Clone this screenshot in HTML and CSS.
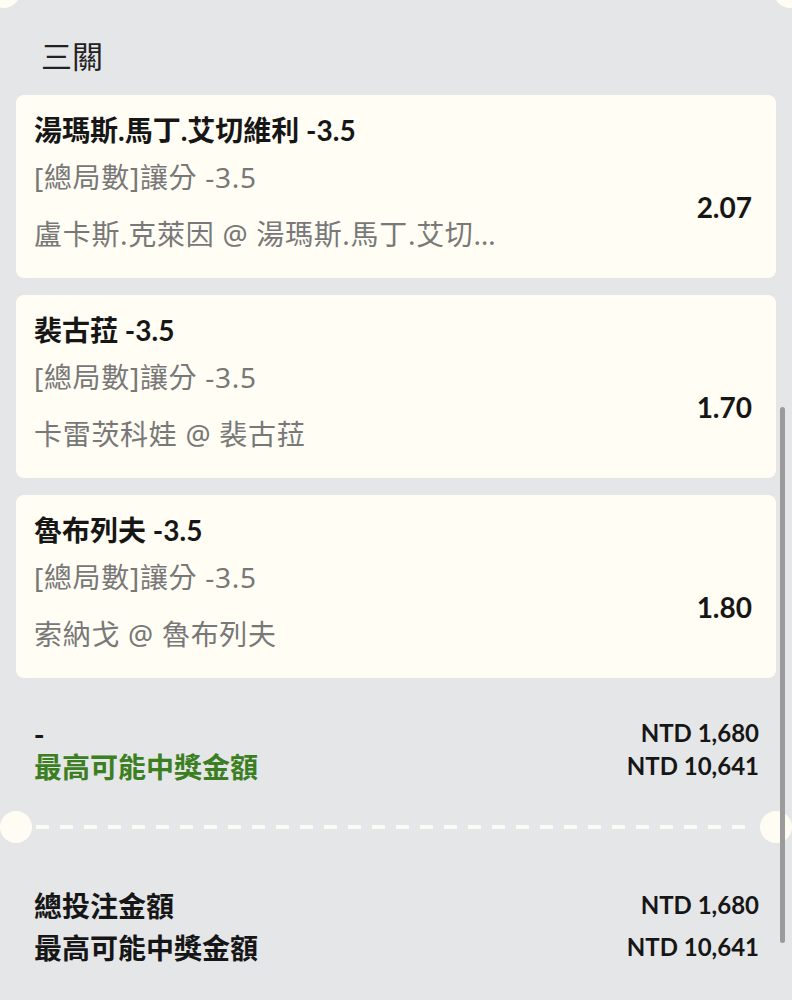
FILE: index.html
```html
<!DOCTYPE html>
<html lang="zh-Hant">
<head>
<meta charset="utf-8">
<title>三關</title>
<link rel="stylesheet" href="styles.css">
</head>
<body>
<div class="sheet">
  <span class="notch notch-tl"></span>
  <span class="notch notch-tr"></span>

  <h2 class="section-title">三關</h2>

  <div class="legs">
    <div class="leg">
      <div class="leg-name">湯瑪斯.馬丁.艾切維利 -3.5</div>
      <div class="leg-market">[總局數]讓分 -3.5</div>
      <div class="leg-event">盧卡斯.克萊因 @ 湯瑪斯.馬丁.艾切維利</div>
      <div class="leg-odds">2.07</div>
    </div>
    <div class="leg">
      <div class="leg-name">裴古菈 -3.5</div>
      <div class="leg-market">[總局數]讓分 -3.5</div>
      <div class="leg-event">卡雷茨科娃 @ 裴古菈</div>
      <div class="leg-odds">1.70</div>
    </div>
    <div class="leg">
      <div class="leg-name">魯布列夫 -3.5</div>
      <div class="leg-market">[總局數]讓分 -3.5</div>
      <div class="leg-event">索納戈 @ 魯布列夫</div>
      <div class="leg-odds">1.80</div>
    </div>
  </div>

  <div class="summary">
    <div class="row">
      <span class="label">-</span>
      <span class="amount">NTD 1,680</span>
    </div>
    <div class="row">
      <span class="label label-win">最高可能中獎金額</span>
      <span class="amount">NTD 10,641</span>
    </div>
  </div>

  <div class="divider">
    <span class="hole"></span>
    <span class="dashes"></span>
    <span class="hole"></span>
  </div>

  <div class="totals">
    <div class="row">
      <span class="label">總投注金額</span>
      <span class="amount">NTD 1,680</span>
    </div>
    <div class="row">
      <span class="label">最高可能中獎金額</span>
      <span class="amount">NTD 10,641</span>
    </div>
  </div>

  <span class="scrollbar"></span>
</div>
</body>
</html>
```

FILE: styles.css
```css
* { box-sizing: border-box; }

html, body {
  margin: 0;
  padding: 0;
}

body {
  background: #e5e6e8;
  font-family: Lato, "Noto Sans CJK TC", sans-serif;
  color: #1b1b1b;
  overflow: hidden;
}

.sheet {
  position: relative;
  height: 1000px;
  overflow: hidden;
}

.notch {
  position: absolute;
  width: 32px;
  height: 32px;
  border-radius: 50%;
  background: #fffdf3;
}
.notch-tl { left: -12px; top: -24px; }
.notch-tr { left: 774px; top: -24px; }

.section-title {
  margin: 0;
  padding: 35px 0 0 41px;
  height: 95px;
  font-family: "Noto Sans CJK TC", sans-serif;
  font-weight: 400;
  font-size: 31px;
  line-height: 40px;
  color: #222;
}

.legs {
  display: flex;
  flex-direction: column;
  gap: 17px;
  padding: 0 16px;
}

.leg {
  background: #fffdf4;
  border-radius: 8px;
  height: 183px;
  padding: 17px 24px 24px 18px;
  display: grid;
  grid-template-columns: 470px 1fr;
  grid-template-rows: auto auto auto;
  align-content: start;
}

.leg-name {
  grid-column: 1;
  grid-row: 1;
  font-size: 28px;
  font-weight: 700;
  line-height: 36px;
  color: #161616;
  white-space: nowrap;
}

.leg-market,
.leg-event {
  grid-column: 1;
  font-family: "Noto Sans", "Noto Sans CJK TC", sans-serif;
  font-size: 28px;
  line-height: 36px;
  letter-spacing: 0.7px;
  color: #787878;
  white-space: nowrap;
}

.leg-market {
  grid-row: 2;
  margin-top: 11px;
}

.leg-event {
  grid-row: 3;
  margin-top: 21px;
  overflow: hidden;
  text-overflow: ellipsis;
}

.leg-odds {
  grid-column: 2;
  grid-row: 1 / span 3;
  align-self: start;
  justify-self: end;
  margin-top: 77px;
  font-size: 28px;
  line-height: 36px;
  font-weight: 700;
  color: #161616;
}

.summary {
  padding: 38px 33px 0 34px;
}

.row {
  display: flex;
  justify-content: space-between;
  align-items: center;
  font-weight: 700;
}

.summary .row { height: 33px; }
.totals .row { height: 42px; }

.label {
  font-family: "Noto Sans CJK TC", sans-serif;
  font-size: 28px;
  line-height: 30px;
  font-weight: 700;
  color: #161616;
}

.label-win { color: #3c7e22; }

.amount {
  font-family: Lato, sans-serif;
  font-size: 24px;
  line-height: 30px;
  font-weight: 700;
  color: #161616;
}

.divider {
  display: flex;
  align-items: center;
  margin-top: 29px;
  height: 32px;
}

.hole {
  flex: 0 0 32px;
  height: 32px;
  border-radius: 50%;
  background: #fffdf3;
}

.dashes {
  flex: 1;
  height: 4px;
  margin: 0 4px;
  background: repeating-linear-gradient(to right, #fbfbf6 0 13px, transparent 13px 24px);
}

.totals {
  padding: 41px 33px 0 34px;
}

.scrollbar {
  position: absolute;
  left: 780px;
  top: 407px;
  width: 5px;
  height: 536px;
  border-radius: 3px;
  background: #9b9b9b;
}
```
